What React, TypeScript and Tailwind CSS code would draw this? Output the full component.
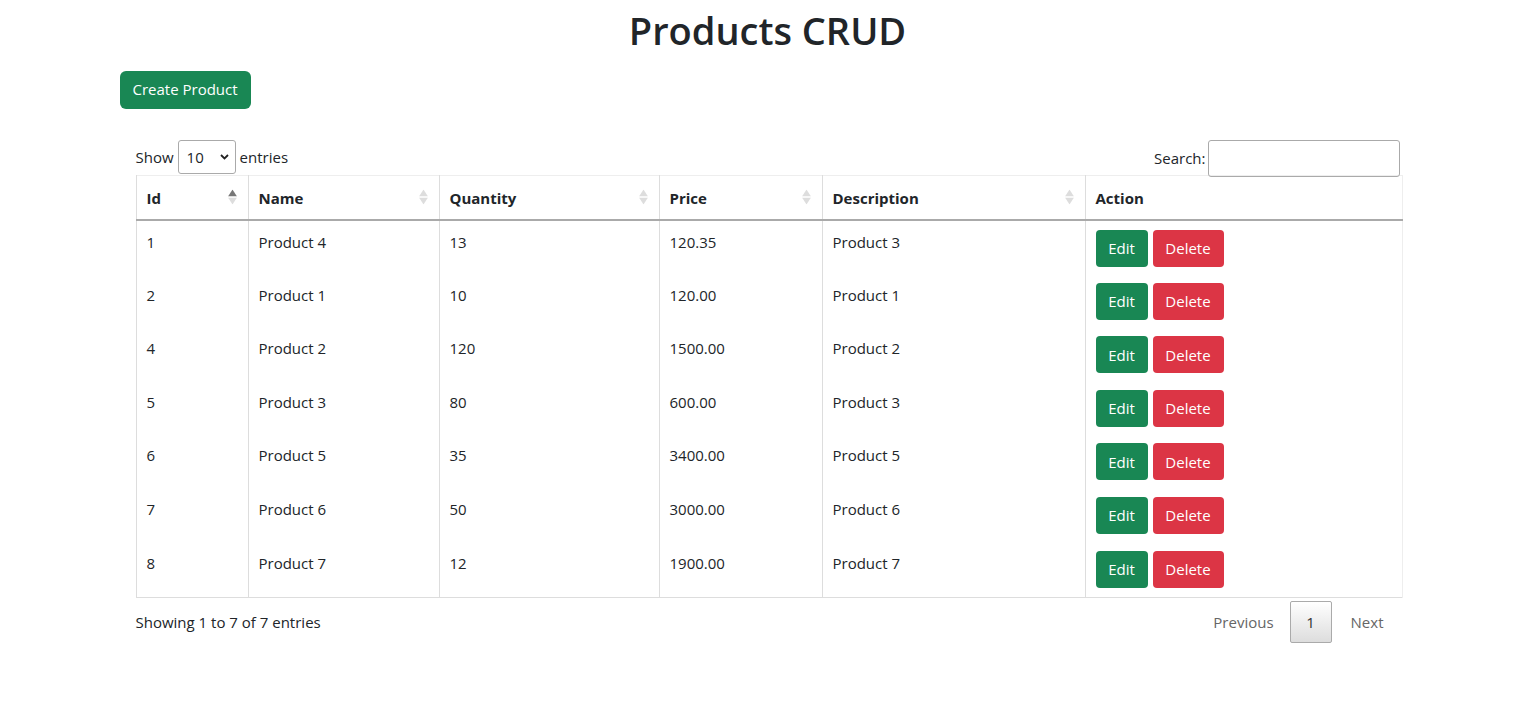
const products = [
  { id: 1, name: "Product 4", quantity: 13, price: "120.35", description: "Product 3" },
  { id: 2, name: "Product 1", quantity: 10, price: "120.00", description: "Product 1" },
  { id: 4, name: "Product 2", quantity: 120, price: "1500.00", description: "Product 2" },
  { id: 5, name: "Product 3", quantity: 80, price: "600.00", description: "Product 3" },
  { id: 6, name: "Product 5", quantity: 35, price: "3400.00", description: "Product 5" },
  { id: 7, name: "Product 6", quantity: 50, price: "3000.00", description: "Product 6" },
  { id: 8, name: "Product 7", quantity: 12, price: "1900.00", description: "Product 7" },
];

const columns = [
  { label: "Id", width: "w-[112px]", active: true },
  { label: "Name", width: "w-[191px]" },
  { label: "Quantity", width: "w-[220px]" },
  { label: "Price", width: "w-[163px]" },
  { label: "Description", width: "w-[263px]" },
];

const SortIcon = ({ active }: { active?: boolean }) => (
  <span className="absolute right-[11px] top-1/2 -translate-y-1/2 flex flex-col items-center leading-none">
    <svg width="9" height="7" viewBox="0 0 9 7">
      <path d="M4.5 0 L9 7 L0 7 Z" fill={active ? "#777" : "#ddd"} />
    </svg>
    <svg width="9" height="7" viewBox="0 0 9 7" className="mt-[1px]">
      <path d="M0 0 L9 0 L4.5 7 Z" fill="#ddd" />
    </svg>
  </span>
);

const App = () => {
  return (
    <div className="min-h-screen bg-white text-[#212529] text-[15px]" style={{ fontFamily: '"Open Sans", "Noto Sans", sans-serif' }}>
      <div className="w-[1296px] mx-auto">
        <h1 className="text-center text-[38px] font-semibold leading-[1.2] pt-[8px] mb-[17px]">Products CRUD</h1>
        <button className="bg-[#198754] text-white rounded-[6px] px-[13px] h-[38px] text-[15px]">Create Product</button>

        <div className="pl-[16px] pr-[13px] mt-[29px]">
          <div className="flex justify-between items-center">
            <label className="flex items-center gap-[4px]">
              Show
              <span className="relative inline-flex items-center w-[58px] h-[34px] border border-[#aaa] rounded-[3px] px-[8px]">
                10
                <svg className="absolute right-[6px]" width="9" height="6" viewBox="0 0 9 6">
                  <path d="M1 1 L4.5 4.5 L8 1" stroke="#222" strokeWidth="1.8" fill="none" />
                </svg>
              </span>
              entries
            </label>
            <label className="flex items-center gap-[2px] mr-[3px] mt-[2px]">
              Search:
              <span className="w-[192px] h-[37px] border border-[#aaa] rounded-[3px]" />
            </label>
          </div>

          <table className="w-full border-collapse table-fixed mt-[-2px]">
            <thead>
              <tr className="border-b-2 border-[#aaa] border-t border-t-[#eee]">
                {columns.map((c) => (
                  <th key={c.label} className={`${c.width} relative text-left font-bold h-[45px] pl-[10px] pt-[1px] border-x border-[#ddd]`}>
                    {c.label}
                    <SortIcon active={c.active} />
                  </th>
                ))}
                <th className="text-left font-bold pl-[10px] pt-[1px] border-x border-[#ddd] border-r-[#eee]">Action</th>
              </tr>
            </thead>
            <tbody>
              {products.map((p, i) => {
                const last = i === products.length - 1;
                return (
                  <tr key={p.id} className={last ? "border-b border-[#ddd]" : ""}>
                    <td className={`align-top pl-[10px] pt-[10px] border-x border-[#ddd] ${last ? "h-[56px]" : "h-[53.6px]"}`}>{p.id}</td>
                    <td className="align-top pl-[10px] pt-[10px] border-x border-[#ddd]">{p.name}</td>
                    <td className="align-top pl-[10px] pt-[10px] border-x border-[#ddd]">{p.quantity}</td>
                    <td className="align-top pl-[10px] pt-[10px] border-x border-[#ddd]">{p.price}</td>
                    <td className="align-top pl-[10px] pt-[10px] border-x border-[#ddd]">{p.description}</td>
                    <td className="align-top pl-[10px] pt-[9px] border-x border-[#ddd] border-r-[#eee]">
                      <div className="flex gap-[5px]">
                        <button className="bg-[#198754] text-white rounded-[4px] h-[37px] w-[52px]">Edit</button>
                        <button className="bg-[#dc3545] text-white rounded-[4px] h-[37px] w-[71px]">Delete</button>
                      </div>
                    </td>
                  </tr>
                );
              })}
            </tbody>
          </table>

          <div className="flex justify-between items-center mt-[3px]">
            <span>Showing 1 to 7 of 7 entries</span>
            <div className="flex items-center text-[#666]">
              <span className="px-[16px]">Previous</span>
              <span className="w-[42px] h-[42px] flex items-center justify-center border border-[#aaa] rounded-[2px] text-[#333] bg-gradient-to-b from-white to-[#ddd]">1</span>
              <span className="px-[19px]">Next</span>
            </div>
          </div>
        </div>
      </div>
    </div>
  );
};

export default App;
